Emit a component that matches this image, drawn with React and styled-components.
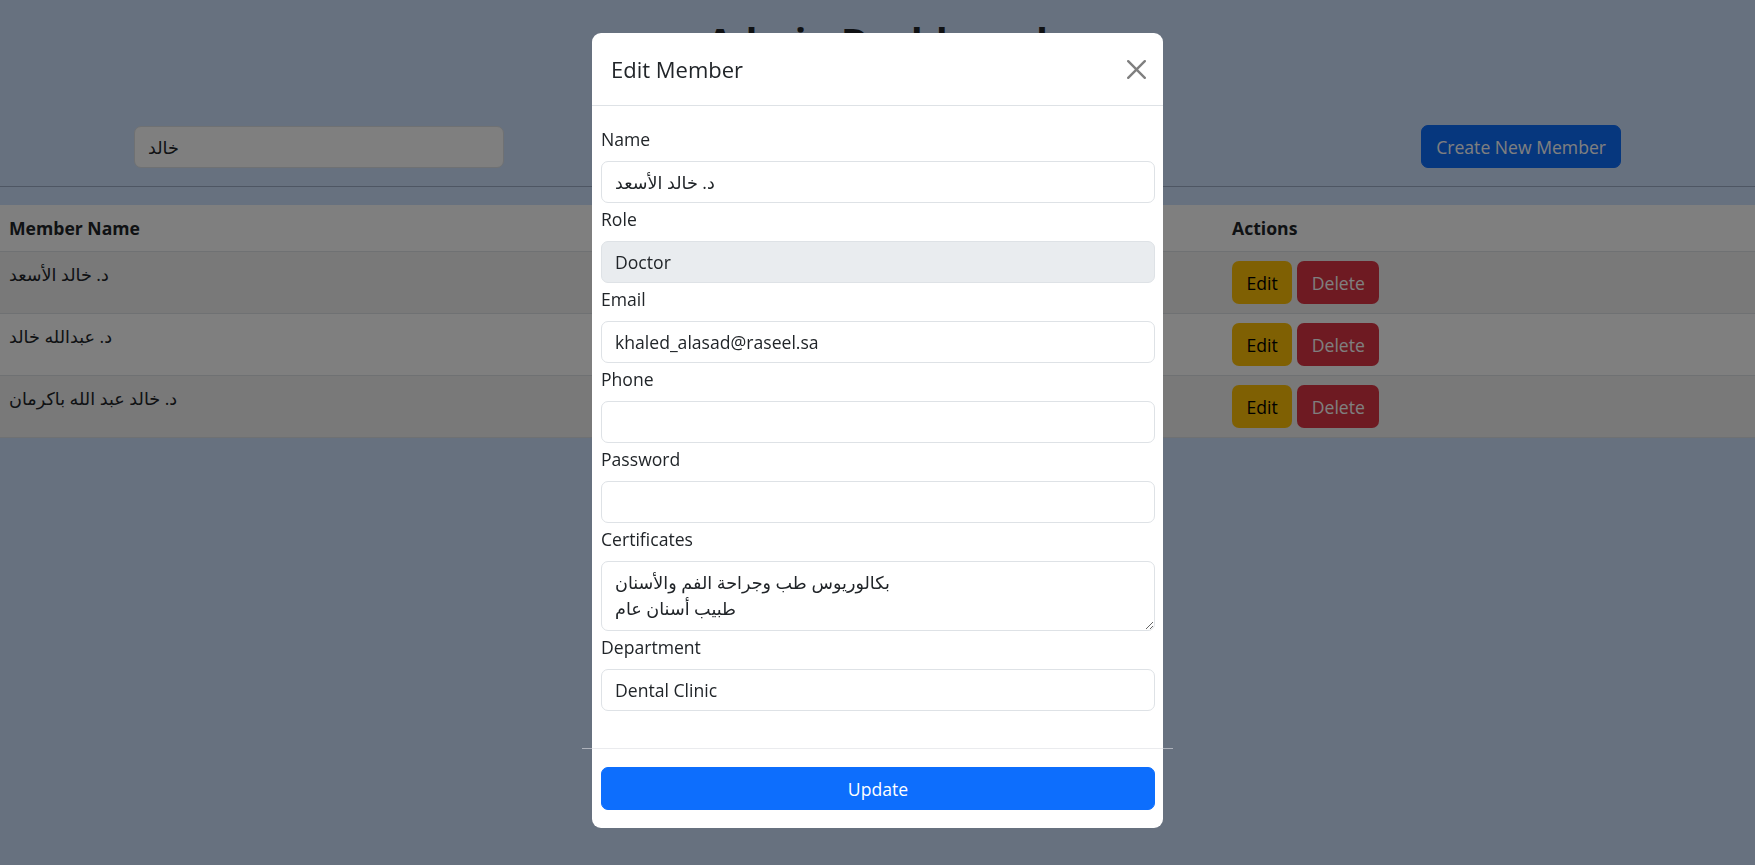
import React from "react";
import styled, { createGlobalStyle } from "styled-components";

const GlobalStyle = createGlobalStyle`
  * {
    box-sizing: border-box;
  }
  body {
    margin: 0;
    background: #cfe2ff;
    font-family: "Open Sans", "DejaVu Sans", sans-serif;
    font-size: 17.6px;
    line-height: 26px;
    color: #212529;
  }
`;

const Page = styled.div`
  padding-top: 18px;
`;

const Title = styled.h1`
  margin: 0 0 61px;
  text-align: center;
  font-size: 38px;
  line-height: 46px;
  font-weight: 700;
`;

const Toolbar = styled.div`
  display: flex;
  justify-content: space-between;
  align-items: center;
  padding: 0 134px;
`;

const SearchInput = styled.input`
  width: 370px;
  height: 42px;
  padding: 7px 13px;
  border: 1px solid #dee2e6;
  border-radius: 7px;
  background: #fff;
  font: inherit;
  color: #212529;
`;

const PrimaryButton = styled.button`
  height: 43px;
  padding: 0 14px;
  border: 1px solid #0d6efd;
  border-radius: 7px;
  background: #0d6efd;
  color: #fff;
  font: inherit;
  width: ${(p) => (p.$block ? "100%" : "auto")};
`;

const Divider = styled.hr`
  margin: 18px 0;
  border: 0;
  border-top: 1px solid #9cadc6;
`;

const Table = styled.table`
  width: 100%;
  border-collapse: collapse;
  table-layout: fixed;
`;

const Th = styled.th`
  padding: 10px 9px;
  text-align: left;
  font-weight: 700;
  background: #fff;
  border-bottom: 1px solid #dee2e6;
`;

const Td = styled.td`
  padding: 9px;
  vertical-align: top;
  border-bottom: 1px solid #dee2e6;
  background: ${(p) => (p.$striped ? "#f2f2f2" : "#fff")};
`;

const Actions = styled.div`
  display: flex;
  gap: 5px;
`;

const ActionButton = styled.button`
  height: 43px;
  padding: 0 14.5px;
  border: 0;
  border-radius: 7px;
  font: inherit;
  background: ${(p) => (p.$danger ? "#dc3545" : "#ffc107")};
  color: ${(p) => (p.$danger ? "#fff" : "#000")};
`;

const Backdrop = styled.div`
  position: fixed;
  inset: 0;
  background: rgba(0, 0, 0, 0.5);
`;

const ModalLayer = styled.div`
  position: fixed;
  inset: 0;
`;

const Dialog = styled.div`
  width: 571px;
  margin: 33px auto 0;
  background: #fff;
  border-radius: 9px;
`;

const ModalHeader = styled.div`
  display: flex;
  align-items: center;
  justify-content: space-between;
  padding: 20px 17px 19px 19px;
  border-bottom: 1px solid #dee2e6;
`;

const ModalTitle = styled.h5`
  margin: 0;
  font-size: 22px;
  line-height: 33px;
  font-weight: 500;
`;

const CloseButton = styled.button`
  display: flex;
  padding: 0;
  border: 0;
  background: none;
`;

const ModalBody = styled.div`
  padding: 20px 8px 34px 9px;
`;

const Field = styled.div`
  margin-bottom: 3px;
`;

const Label = styled.label`
  display: block;
  margin-bottom: 9px;
`;

const Control = styled.input`
  display: block;
  width: 100%;
  height: 42px;
  padding: 7px 13px;
  border: 1px solid #dee2e6;
  border-radius: 7px;
  font: inherit;
  color: #212529;
  background: ${(p) => (p.disabled ? "#e9ecef" : "#fff")};
  opacity: 1;
`;

const TextArea = styled.textarea`
  display: block;
  width: 100%;
  height: 70px;
  padding: 7px 13px;
  border: 1px solid #dee2e6;
  border-radius: 7px;
  font: inherit;
  color: #212529;
  resize: vertical;
`;

const FooterRule = styled.hr`
  margin: 0 -10px;
  border: 0;
  border-top: 1px solid rgba(220, 222, 226, 0.6);
`;

const ModalFooter = styled.div`
  padding: 18px 8px 18px 9px;
`;

const members = [
  { name: "د. خالد الأسعد", role: "Doctor" },
  { name: "د. عبدالله خالد", role: "Doctor" },
  { name: "د. خالد عبد الله باكرمان", role: "Doctor" },
];

const CloseIcon = () => (
  <svg width="19" height="19" viewBox="0 0 16 16" fill="#000" fillOpacity="0.5">
    <path d="M.293.293a1 1 0 0 1 1.414 0L8 6.586 14.293.293a1 1 0 1 1 1.414 1.414L9.414 8l6.293 6.293a1 1 0 0 1-1.414 1.414L8 9.414l-6.293 6.293a1 1 0 0 1-1.414-1.414L6.586 8 .293 1.707a1 1 0 0 1 0-1.414z" />
  </svg>
);

const App = () => {
  return (
    <>
      <GlobalStyle />
      <Page>
        <Title>Admin Dashboard</Title>
        <Toolbar>
          <SearchInput defaultValue="خالد" />
          <PrimaryButton>Create New Member</PrimaryButton>
        </Toolbar>
        <Divider />
        <Table>
          <colgroup>
            <col style={{ width: 600 }} />
            <col style={{ width: 623 }} />
            <col />
          </colgroup>
          <thead>
            <tr>
              <Th>Member Name</Th>
              <Th>Role</Th>
              <Th>Actions</Th>
            </tr>
          </thead>
          <tbody>
            {members.map((m, i) => (
              <tr key={m.name}>
                <Td $striped={i % 2 === 0}>{m.name}</Td>
                <Td $striped={i % 2 === 0}>{m.role}</Td>
                <Td $striped={i % 2 === 0}>
                  <Actions>
                    <ActionButton>Edit</ActionButton>
                    <ActionButton $danger>Delete</ActionButton>
                  </Actions>
                </Td>
              </tr>
            ))}
          </tbody>
        </Table>
      </Page>

      <Backdrop />
      <ModalLayer>
        <Dialog>
          <ModalHeader>
            <ModalTitle>Edit Member</ModalTitle>
            <CloseButton aria-label="Close">
              <CloseIcon />
            </CloseButton>
          </ModalHeader>
          <ModalBody>
            <Field>
              <Label>Name</Label>
              <Control defaultValue="د. خالد الأسعد" />
            </Field>
            <Field>
              <Label>Role</Label>
              <Control defaultValue="Doctor" disabled />
            </Field>
            <Field>
              <Label>Email</Label>
              <Control defaultValue="khaled_alasad@raseel.sa" />
            </Field>
            <Field>
              <Label>Phone</Label>
              <Control defaultValue="" />
            </Field>
            <Field>
              <Label>Password</Label>
              <Control type="password" defaultValue="" />
            </Field>
            <Field>
              <Label>Certificates</Label>
              <TextArea defaultValue={"بكالوريوس طب وجراحة الفم والأسنان\nطبيب أسنان عام"} />
            </Field>
            <Field>
              <Label>Department</Label>
              <Control defaultValue="Dental Clinic" />
            </Field>
          </ModalBody>
          <FooterRule />
          <ModalFooter>
            <PrimaryButton $block>Update</PrimaryButton>
          </ModalFooter>
        </Dialog>
      </ModalLayer>
    </>
  );
};

export default App;
